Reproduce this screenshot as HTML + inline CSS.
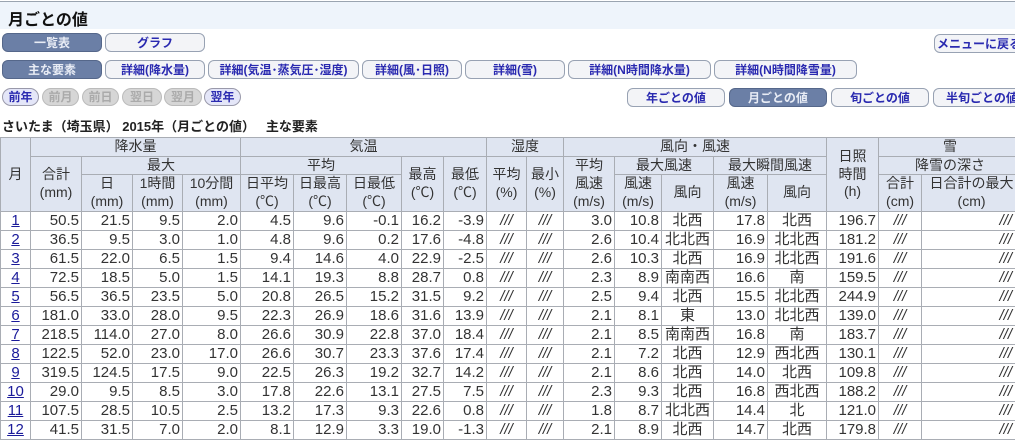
<!DOCTYPE html>
<html><head><meta charset="utf-8">
<style>
body{margin:0;width:1015px;height:441px;overflow:hidden;background:#fff;font-family:"Liberation Sans","Noto Sans CJK JP",sans-serif;color:#222;position:relative}
.bar{position:absolute;left:0;top:1px;width:1015px;height:27px;background:#eef4fb;border-top:1px solid #9aa4b0}
.bar span{position:absolute;left:8px;top:4px;font-size:16px;font-weight:bold;color:#111}
.b{position:absolute;height:19px;border:1px solid #98a2b3;border-radius:6px;background:#f3f4f7;color:#2a2ab0;font-size:12px;font-weight:bold;text-align:center;line-height:19px;box-sizing:border-box;white-space:nowrap;overflow:hidden}
.b.on{background:#6b7fa6;color:#e8ecf5;border-color:#55678a}
.s{position:absolute;top:88px;height:18px;border:1px solid #9aa;border-radius:9px;font-size:12px;font-weight:bold;line-height:16px;text-align:center;box-sizing:border-box}
.s.a{background:#e4e6f8;color:#2a2ab0;border-color:#99a}
.s.d{background:#d6d6d6;color:#aaa;border-color:#bbb}
.ttl{position:absolute;left:2px;top:116px;font-size:13px;font-weight:bold;color:#222}
table{position:absolute;left:0;top:137px;width:1021px;border-collapse:collapse;table-layout:fixed;font-size:15px}
td,th{border:1px solid #a9adb4;padding:0 2px;white-space:nowrap;overflow:hidden}
th{background:#dfe5f1;font-weight:normal;font-size:14px;line-height:17.7px;color:#333}
td{height:18px;line-height:18px;text-align:right;color:#333}
td.m{text-align:center}
td.m a{color:#1a1a9a;text-decoration:underline}
td.c{text-align:center}
td.i{font-style:italic;text-align:center}
td.ir{font-style:italic;padding-right:9px}
</style></head><body>
<div class="bar"><span>月ごとの値</span></div>
<div class="b on" style="left:2px;top:33px;width:100px">一覧表</div>
<div class="b" style="left:105px;top:33px;width:100px">グラフ</div>
<div class="b" style="left:934px;top:34px;width:90px">メニューに戻る</div>
<div class="b on" style="left:2px;top:60px;width:100px">主な要素</div>
<div class="b" style="left:105px;top:60px;width:100px">詳細(降水量)</div>
<div class="b" style="left:208px;top:60px;width:151px">詳細(気温･蒸気圧･湿度)</div>
<div class="b" style="left:362px;top:60px;width:100px">詳細(風･日照)</div>
<div class="b" style="left:465px;top:60px;width:100px">詳細(雪)</div>
<div class="b" style="left:568px;top:60px;width:143px">詳細(N時間降水量)</div>
<div class="b" style="left:714px;top:60px;width:143px">詳細(N時間降雪量)</div>
<div class="s a" style="left:2px;width:37px">前年</div>
<div class="s d" style="left:42px;width:37px">前月</div>
<div class="s d" style="left:82px;width:37px">前日</div>
<div class="s d" style="left:122px;width:40px">翌日</div>
<div class="s d" style="left:164px;width:38px">翌月</div>
<div class="s a" style="left:204px;width:37px">翌年</div>
<div class="b" style="left:627px;top:88px;width:98px">年ごとの値</div>
<div class="b on" style="left:729px;top:88px;width:98px">月ごとの値</div>
<div class="b" style="left:831px;top:88px;width:98px">旬ごとの値</div>
<div class="b" style="left:933px;top:88px;width:98px">半旬ごとの値</div>
<div class="ttl">さいたま（埼玉県）&nbsp;2015年（月ごとの値）&nbsp;&nbsp;&nbsp;主な要素</div>
<table>
<colgroup><col style="width:30px"><col style="width:51px"><col style="width:51px"><col style="width:50px"><col style="width:58px"><col style="width:53px"><col style="width:53px"><col style="width:55px"><col style="width:42px"><col style="width:43px"><col style="width:40px"><col style="width:37px"><col style="width:51px"><col style="width:47px"><col style="width:52px"><col style="width:54px"><col style="width:59px"><col style="width:52px"><col style="width:43px"><col style="width:100px"></colgroup>
<tr><th rowspan="3">月</th><th colspan="4">降水量</th><th colspan="5">気温</th><th colspan="2">湿度</th><th colspan="5">風向・風速</th><th rowspan="3">日照<br>時間<br>(h)</th><th colspan="2">雪</th></tr>
<tr><th rowspan="2">合計<br>(mm)</th><th colspan="3">最大</th><th colspan="3">平均</th><th rowspan="2">最高<br>(℃)</th><th rowspan="2">最低<br>(℃)</th><th rowspan="2">平均<br>(%)</th><th rowspan="2">最小<br>(%)</th><th rowspan="2">平均<br>風速<br>(m/s)</th><th colspan="2">最大風速</th><th colspan="2">最大瞬間風速</th><th colspan="2">降雪の深さ</th></tr>
<tr><th>日<br>(mm)</th><th>1時間<br>(mm)</th><th>10分間<br>(mm)</th><th>日平均<br>(℃)</th><th>日最高<br>(℃)</th><th>日最低<br>(℃)</th><th>風速<br>(m/s)</th><th>風向</th><th>風速<br>(m/s)</th><th>風向</th><th>合計<br>(cm)</th><th>日合計の最大<br>(cm)</th></tr>
<tr><td class="m"><a>1</a></td><td>50.5</td><td>21.5</td><td>9.5</td><td>2.0</td><td>4.5</td><td>9.6</td><td>-0.1</td><td>16.2</td><td>-3.9</td><td class="i">///</td><td class="i">///</td><td>3.0</td><td>10.8</td><td class="c">北西</td><td>17.8</td><td class="c">北西</td><td>196.7</td><td class="i">///</td><td class="ir">///</td></tr>
<tr><td class="m"><a>2</a></td><td>36.5</td><td>9.5</td><td>3.0</td><td>1.0</td><td>4.8</td><td>9.6</td><td>0.2</td><td>17.6</td><td>-4.8</td><td class="i">///</td><td class="i">///</td><td>2.6</td><td>10.4</td><td class="c">北北西</td><td>16.9</td><td class="c">北北西</td><td>181.2</td><td class="i">///</td><td class="ir">///</td></tr>
<tr><td class="m"><a>3</a></td><td>61.5</td><td>22.0</td><td>6.5</td><td>1.5</td><td>9.4</td><td>14.6</td><td>4.0</td><td>22.9</td><td>-2.5</td><td class="i">///</td><td class="i">///</td><td>2.6</td><td>10.3</td><td class="c">北西</td><td>16.9</td><td class="c">北北西</td><td>191.6</td><td class="i">///</td><td class="ir">///</td></tr>
<tr><td class="m"><a>4</a></td><td>72.5</td><td>18.5</td><td>5.0</td><td>1.5</td><td>14.1</td><td>19.3</td><td>8.8</td><td>28.7</td><td>0.8</td><td class="i">///</td><td class="i">///</td><td>2.3</td><td>8.9</td><td class="c">南南西</td><td>16.6</td><td class="c">南</td><td>159.5</td><td class="i">///</td><td class="ir">///</td></tr>
<tr><td class="m"><a>5</a></td><td>56.5</td><td>36.5</td><td>23.5</td><td>5.0</td><td>20.8</td><td>26.5</td><td>15.2</td><td>31.5</td><td>9.2</td><td class="i">///</td><td class="i">///</td><td>2.5</td><td>9.4</td><td class="c">北西</td><td>15.5</td><td class="c">北北西</td><td>244.9</td><td class="i">///</td><td class="ir">///</td></tr>
<tr><td class="m"><a>6</a></td><td>181.0</td><td>33.0</td><td>28.0</td><td>9.5</td><td>22.3</td><td>26.9</td><td>18.6</td><td>31.6</td><td>13.9</td><td class="i">///</td><td class="i">///</td><td>2.1</td><td>8.1</td><td class="c">東</td><td>13.0</td><td class="c">北北西</td><td>139.0</td><td class="i">///</td><td class="ir">///</td></tr>
<tr><td class="m"><a>7</a></td><td>218.5</td><td>114.0</td><td>27.0</td><td>8.0</td><td>26.6</td><td>30.9</td><td>22.8</td><td>37.0</td><td>18.4</td><td class="i">///</td><td class="i">///</td><td>2.1</td><td>8.5</td><td class="c">南南西</td><td>16.8</td><td class="c">南</td><td>183.7</td><td class="i">///</td><td class="ir">///</td></tr>
<tr><td class="m"><a>8</a></td><td>122.5</td><td>52.0</td><td>23.0</td><td>17.0</td><td>26.6</td><td>30.7</td><td>23.3</td><td>37.6</td><td>17.4</td><td class="i">///</td><td class="i">///</td><td>2.1</td><td>7.2</td><td class="c">北西</td><td>12.9</td><td class="c">西北西</td><td>130.1</td><td class="i">///</td><td class="ir">///</td></tr>
<tr><td class="m"><a>9</a></td><td>319.5</td><td>124.5</td><td>17.5</td><td>9.0</td><td>22.5</td><td>26.3</td><td>19.2</td><td>32.7</td><td>14.2</td><td class="i">///</td><td class="i">///</td><td>2.1</td><td>8.6</td><td class="c">北西</td><td>14.0</td><td class="c">北西</td><td>109.8</td><td class="i">///</td><td class="ir">///</td></tr>
<tr><td class="m"><a>10</a></td><td>29.0</td><td>9.5</td><td>8.5</td><td>3.0</td><td>17.8</td><td>22.6</td><td>13.1</td><td>27.5</td><td>7.5</td><td class="i">///</td><td class="i">///</td><td>2.3</td><td>9.3</td><td class="c">北西</td><td>16.8</td><td class="c">西北西</td><td>188.2</td><td class="i">///</td><td class="ir">///</td></tr>
<tr><td class="m"><a>11</a></td><td>107.5</td><td>28.5</td><td>10.5</td><td>2.5</td><td>13.2</td><td>17.3</td><td>9.3</td><td>22.6</td><td>0.8</td><td class="i">///</td><td class="i">///</td><td>1.8</td><td>8.7</td><td class="c">北北西</td><td>14.4</td><td class="c">北</td><td>121.0</td><td class="i">///</td><td class="ir">///</td></tr>
<tr><td class="m"><a>12</a></td><td>41.5</td><td>31.5</td><td>7.0</td><td>2.0</td><td>8.1</td><td>12.9</td><td>3.3</td><td>19.0</td><td>-1.3</td><td class="i">///</td><td class="i">///</td><td>2.1</td><td>8.9</td><td class="c">北西</td><td>14.7</td><td class="c">北西</td><td>179.8</td><td class="i">///</td><td class="ir">///</td></tr>
</table>
</body></html>
